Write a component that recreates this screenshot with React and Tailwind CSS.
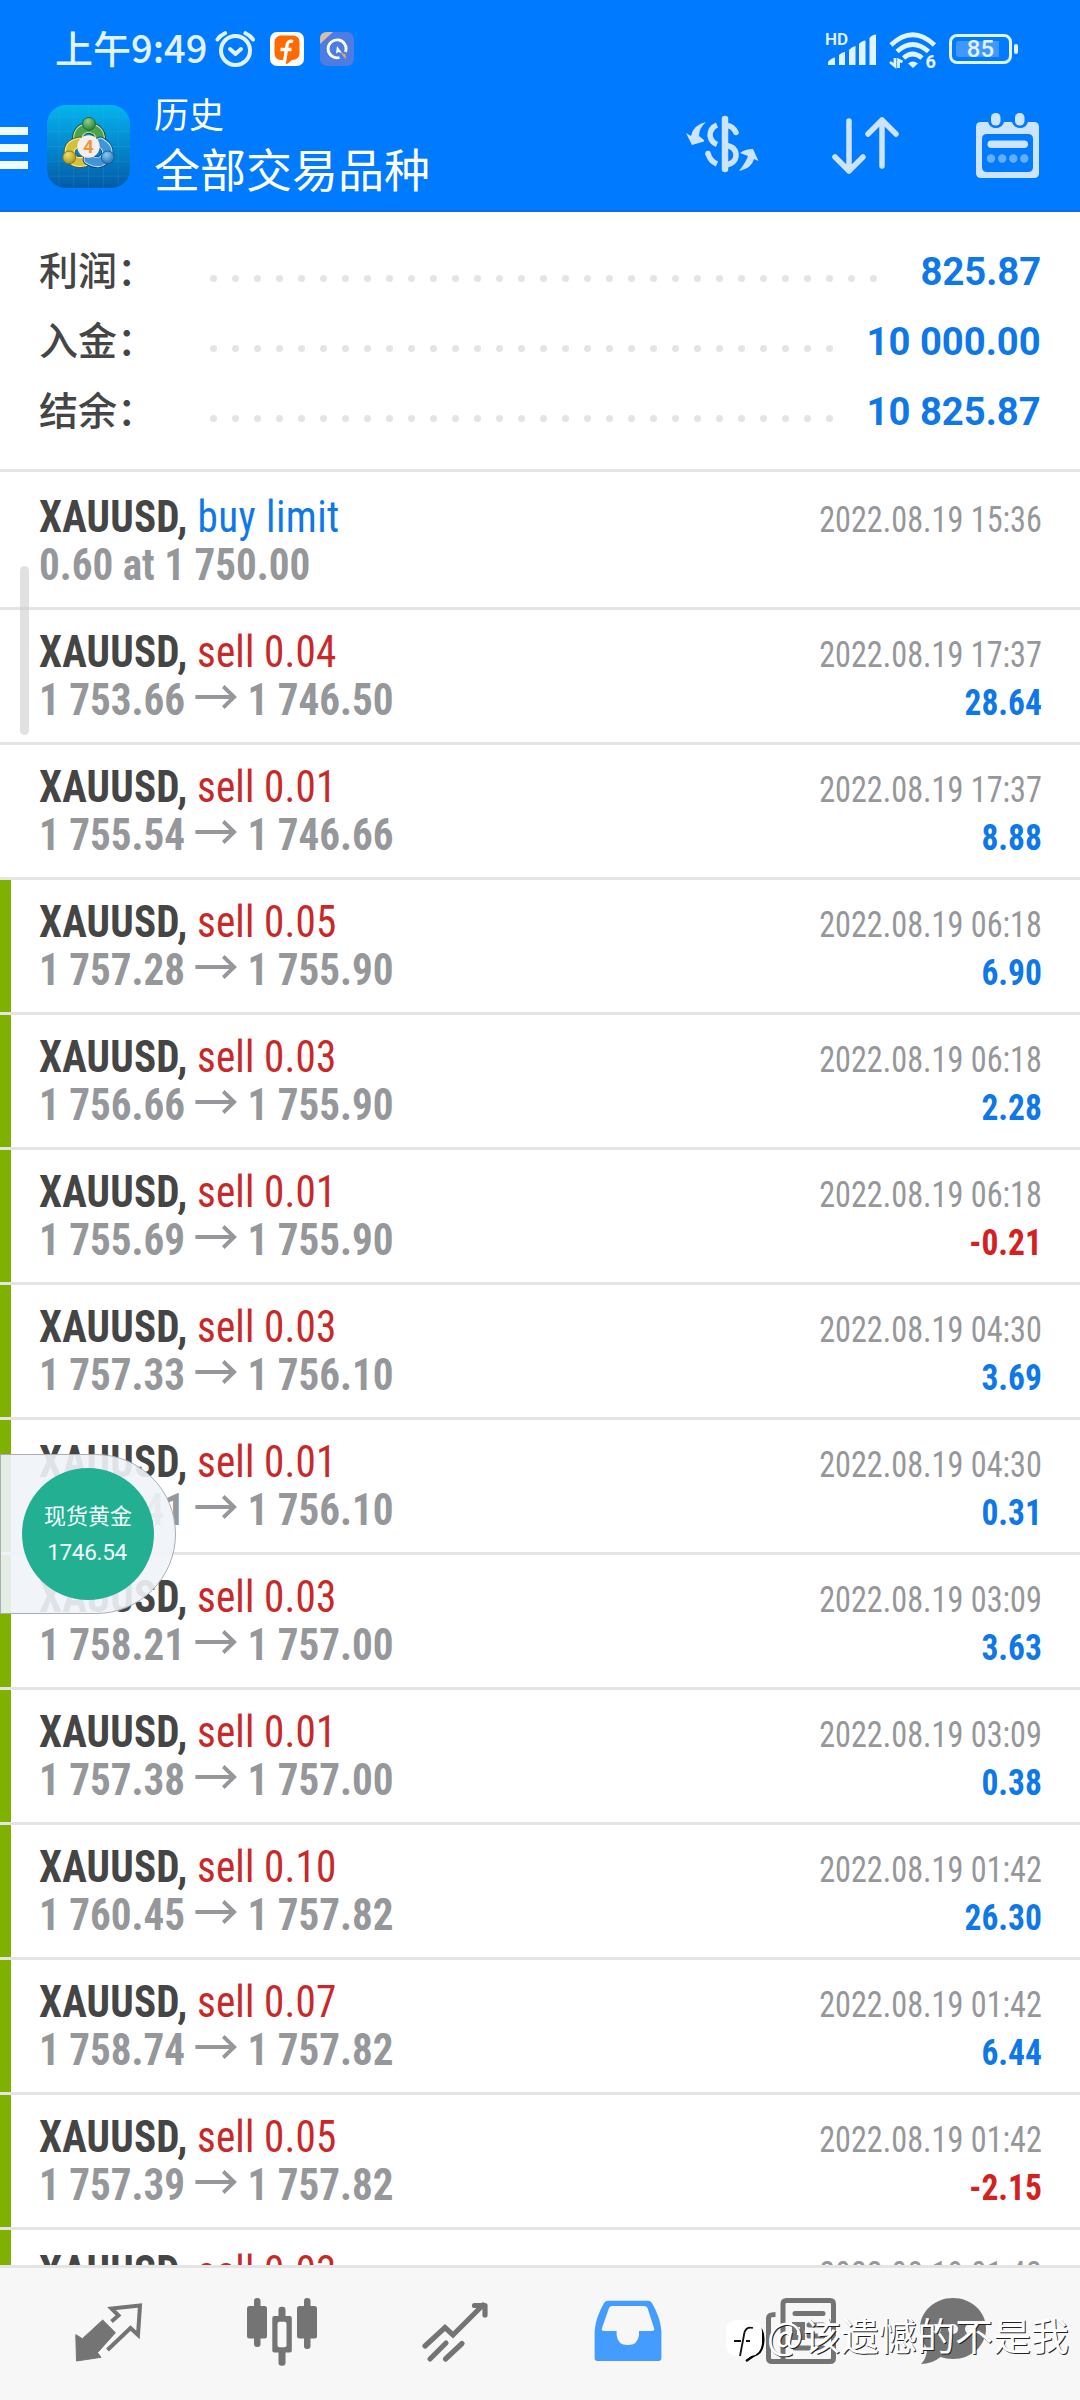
const summary = [
  { label: '利润', value: '825.87', dots: 31 },
  { label: '入金', value: '10 000.00', dots: 29 },
  { label: '结余', value: '10 825.87', dots: 29 },
]

const deals = [
  { type: 'sell 0.04', from: '1 753.66', to: '1 746.50', time: '2022.08.19 17:37', profit: '28.64' },
  { type: 'sell 0.01', from: '1 755.54', to: '1 746.66', time: '2022.08.19 17:37', profit: '8.88' },
  { type: 'sell 0.05', from: '1 757.28', to: '1 755.90', time: '2022.08.19 06:18', profit: '6.90', marked: true },
  { type: 'sell 0.03', from: '1 756.66', to: '1 755.90', time: '2022.08.19 06:18', profit: '2.28', marked: true },
  { type: 'sell 0.01', from: '1 755.69', to: '1 755.90', time: '2022.08.19 06:18', profit: '-0.21', marked: true },
  { type: 'sell 0.03', from: '1 757.33', to: '1 756.10', time: '2022.08.19 04:30', profit: '3.69', marked: true },
  { type: 'sell 0.01', from: '1 756.41', to: '1 756.10', time: '2022.08.19 04:30', profit: '0.31', marked: true },
  { type: 'sell 0.03', from: '1 758.21', to: '1 757.00', time: '2022.08.19 03:09', profit: '3.63', marked: true },
  { type: 'sell 0.01', from: '1 757.38', to: '1 757.00', time: '2022.08.19 03:09', profit: '0.38', marked: true },
  { type: 'sell 0.10', from: '1 760.45', to: '1 757.82', time: '2022.08.19 01:42', profit: '26.30', marked: true },
  { type: 'sell 0.07', from: '1 758.74', to: '1 757.82', time: '2022.08.19 01:42', profit: '6.44', marked: true },
  { type: 'sell 0.05', from: '1 757.39', to: '1 757.82', time: '2022.08.19 01:42', profit: '-2.15', marked: true },
  { type: 'sell 0.03', from: '1 758.05', to: '1 757.82', time: '2022.08.19 01:42', profit: '2.30', marked: true },
]

function StatusBar() {
  return (
    <div className="flex h-[96px] items-start pl-[55px] pr-[62px] text-[#e0f3ff]">
      <span className="mt-[27px] w-[160px] whitespace-nowrap font-['Noto_Sans_CJK_SC',sans-serif] text-[38px] font-medium leading-[40px]">
        上午9:49
      </span>
      <svg className="mt-[30px] h-[38px] w-[40px]" viewBox="0 0 40 38" fill="none" stroke="currentColor">
        <circle cx="20.5" cy="20.5" r="14.5" strokeWidth="4" />
        <path d="M15 19l5.500 5 5.500-5" strokeWidth="4" strokeLinecap="round" strokeLinejoin="round" />
        <path d="M2.500 9.500Q5 5.500 10 3.200M38 9.500Q35.500 5.500 30.500 3.200" strokeWidth="4" strokeLinecap="round" />
      </svg>
      <svg className="ml-[15px] mt-[32px] h-[34px] w-[34px]" viewBox="0 0 34 34">
        <rect width="34" height="34" rx="7" fill="#fff" />
        <path d="M11 3.500H23Q29.500 4 29.500 10V21Q29.500 27.500 22 28L16.500 32.500L15 28H11Q4.500 27.500 4.500 21V10Q5 4 11 3.500Z" fill="#ff6a00" />
        <path d="M23 9.500Q17.500 8 17 13.500L14.500 30M10.500 17.500H21.500" stroke="#fff" strokeWidth="3.300" fill="none" />
      </svg>
      <svg className="ml-[16px] mt-[32px] h-[34px] w-[34px]" viewBox="0 0 34 34">
        <rect width="34" height="34" rx="7" fill="#4d7de2" />
        <path d="M0 12V7Q0 0 7 0H13Z" fill="#d9bfa2" />
        <path d="M19.500 25.500A9 9 0 1 1 25.500 20" fill="none" stroke="#fff" strokeWidth="2.800" />
        <path d="M17 14L22 21L18.500 20L16 21.500Z" fill="#fff" />
        <path d="M20.500 21L25.500 22L26 27.500Z" fill="#d5a673" />
      </svg>
      <div className="flex-1" />
      <svg className="mt-[30px] h-[38px] w-[52px]" viewBox="0 0 52 38" fill="currentColor">
        <text x="0" y="15.300" fontFamily="Roboto, sans-serif" fontSize="17" fontWeight="600">HD</text>
        <path d="M3 35V32Q6 28 10 27.500V35ZM14 35V25Q17 22 20 22V35ZM24 35V20Q27 16.500 30.500 16V35ZM34 35V14Q37 10.500 40.500 10.500V35ZM44.500 35V8Q47 4.500 51 4.500V35Z" />
      </svg>
      <svg className="ml-[12px] mt-[30px] h-[40px] w-[48px]" viewBox="0 0 48 40" fill="none" stroke="currentColor" strokeWidth="4.800">
        <path d="M2 15Q23.500-5.500 45.500 15" />
        <path d="M8 21.500Q23.500 7.500 39.500 21.500" />
        <path d="M14.500 28Q23.500 20 33 28" />
        <path d="M24 38L19 33.500Q24 29.500 29 33.500Z" fill="currentColor" stroke="none" />
        <path d="M1 32L6 36V28M13.500 32L9.500 30V38" strokeWidth="2.800" />
        <text x="36.500" y="37.500" fontFamily="Roboto, sans-serif" fontSize="18" fontWeight="800" fill="currentColor" stroke="none">6</text>
      </svg>
      <div className="ml-[12px] mt-[34px] flex items-center">
        <div className="flex h-[30px] w-[63px] rounded-[8px] border-[3px] border-current p-[4px]">
          <div className="flex w-[43px] items-center justify-center rounded-l-[3px] bg-[#4098ff] pl-[6px] font-['Roboto',sans-serif] text-[24px] font-medium leading-none">
            85
          </div>
        </div>
        <div className="ml-[2px] h-[10px] w-[4px] rounded-[2px] bg-current" />
      </div>
    </div>
  )
}

function AppLogo() {
  return (
    <svg className="h-[83px] w-[83px]" viewBox="0 0 84 84">
      <defs>
        <linearGradient id="tile" x1="0" y1="0" x2="0" y2="1">
          <stop offset="0" stopColor="#05b4ee" />
          <stop offset="0.500" stopColor="#0488cc" />
          <stop offset="1" stopColor="#035ba8" />
        </linearGradient>
        <radialGradient id="green" cx="0.400" cy="0.300" r="0.800">
          <stop offset="0" stopColor="#8fd08a" />
          <stop offset="1" stopColor="#1c7a31" />
        </radialGradient>
        <radialGradient id="gold" cx="0.400" cy="0.300" r="0.800">
          <stop offset="0" stopColor="#eee26e" />
          <stop offset="1" stopColor="#a38c10" />
        </radialGradient>
        <radialGradient id="sky" cx="0.400" cy="0.300" r="0.800">
          <stop offset="0" stopColor="#8accf2" />
          <stop offset="1" stopColor="#1564ad" />
        </radialGradient>
      </defs>
      <rect width="84" height="84" rx="19" fill="url(#tile)" />
      <path d="M12 2V82M27 0V84M42 0V84M57 0V84M72 2V82M2 12H82M0 27H84M0 42H84M0 57H84M2 72H82" stroke="#46bdf0" strokeOpacity="0.180" />
      {/* three figures holding the round badge */}
      <g strokeLinecap="round" fill="none">
        <path d="M32 38Q29 25 42 23Q56 25 53 38" stroke="#174f2c" strokeWidth="12" />
        <path d="M32 38Q29 25 42 23Q56 25 53 38" stroke="#dcebc4" strokeWidth="10" />
        <path d="M32 38Q29 25 42 23Q56 25 53 38" stroke="#4ba44c" strokeWidth="8" />
        <path d="M33 38Q22 40 23 49Q25 60 38 57" stroke="#5f5a14" strokeWidth="12" />
        <path d="M33 38Q22 40 23 49Q25 60 38 57" stroke="#f6f2b8" strokeWidth="10" />
        <path d="M33 38Q22 40 23 49Q25 60 38 57" stroke="#d3c03c" strokeWidth="8" />
        <path d="M54 38Q64 44 60 52Q54 62 42 55" stroke="#0c4380" strokeWidth="12" />
        <path d="M54 38Q64 44 60 52Q54 62 42 55" stroke="#cdeafa" strokeWidth="10" />
        <path d="M54 38Q64 44 60 52Q54 62 42 55" stroke="#3f95d6" strokeWidth="8" />
      </g>
      <circle cx="42.500" cy="19" r="6.500" fill="url(#green)" stroke="#1d6a33" />
      <circle cx="22.500" cy="53" r="6.500" fill="url(#gold)" stroke="#85751a" />
      <circle cx="61.500" cy="53" r="6.500" fill="url(#sky)" stroke="#155a9c" />
      <circle cx="42" cy="42" r="11.300" fill="#f4efeb" />
      <text x="42" y="49" textAnchor="middle" fontFamily="Roboto, sans-serif" fontSize="19" fontWeight="700" fill="#f0953c">4</text>
    </svg>
  )
}

function Toolbar() {
  return (
    <div className="flex h-[114px] items-start pr-[40px] text-white">
      <div className="mt-[31px] flex w-[28px] flex-col gap-[9px]">
        <div className="h-[8px] bg-[#f0faff]" />
        <div className="h-[8px] bg-[#f0faff]" />
        <div className="h-[8px] bg-[#f0faff]" />
      </div>
      <div className="ml-[19px] mt-[9px]">
        <AppLogo />
      </div>
      <div className="ml-[24px] font-['Noto_Sans_CJK_SC',sans-serif]">
        <div className="mt-[-3px] text-[35px] leading-[40px]">历史</div>
        <div className="mt-[7px] text-[46px] leading-[54px]">全部交易品种</div>
      </div>
      <div className="flex-1" />
      <svg className="mt-[19px] h-[60px] w-[74px]" viewBox="0 0 74 60" fill="none" stroke="#cce4ff" strokeWidth="5.500">
        <path d="M39 4V54" strokeLinecap="round" strokeWidth="6.500" />
        <path d="M31 10Q24 13 24 20.500Q25 27 31 29.500" />
        <path d="M41 10.500Q47 11 50 17.500" strokeLinecap="round" />
        <path d="M22 38.500Q24 46 31 49" />
        <circle cx="22" cy="38.500" r="2.700" fill="#cce4ff" stroke="none" />
        <path d="M40 30.500Q50 32 50 40Q50 48 40 50" />
        <path d="M20 7Q7 10 5 21L0 18L6 30L18 26.500L18 25L13 21Q13 13 20 7Z" fill="#cce4ff" stroke="none" />
        <path d="M53 56Q60 47 62 41L54 38Q59 34 67 34L72.500 46L68 44Q66 53 53 56Z" fill="#cce4ff" stroke="none" />
      </svg>
      <svg className="ml-[72px] mt-[19px] h-[62px] w-[68px]" viewBox="0 0 68 62" fill="none" stroke="#cce4ff" strokeWidth="5.500" strokeLinecap="round" strokeLinejoin="round">
        <path d="M17 6V56M3 42L17 56L31 42" />
        <path d="M50 51V5M36 19L50 5L64 19" />
      </svg>
      <svg className="ml-[76px] mt-[17px] h-[66px] w-[64px]" viewBox="0 0 64 66">
        <path fillRule="evenodd" fill="#cce4ff" d="M5 9H12Q14 15 20 15Q26 15 28 9H36Q38 15 44 15Q50 15 52 9H58Q63 9 63 14V60Q63 65 58 65H5Q0 65 0 60V14Q0 9 5 9ZM11 21Q6 21 6 26V54Q6 59 11 59H52Q57 59 57 54V26Q57 21 52 21Z" />
        <rect x="15" y="0" width="9.500" height="12.500" rx="4.500" fill="#cce4ff" />
        <rect x="39" y="0" width="9.500" height="12.500" rx="4.500" fill="#cce4ff" />
        <rect x="11.500" y="27.500" width="40.500" height="7.500" rx="3.700" fill="#cce4ff" />
        <g fill="#66afff">
          <circle cx="15" cy="45.500" r="4.200" />
          <circle cx="26.200" cy="45.500" r="4.200" />
          <circle cx="37.300" cy="45.500" r="4.200" />
          <circle cx="48.300" cy="45.500" r="4.200" />
        </g>
      </svg>
    </div>
  )
}

function Summary() {
  return (
    <div className="h-[260px] border-b-[3px] border-[#e4e4e4] pl-[39px] pr-[39px] pt-[24px]">
      {summary.map((item) => (
        <div key={item.label} className="flex h-[70px] items-center">
          <span className="mt-[-6px] w-[171px] font-['Noto_Sans_CJK_SC',sans-serif] text-[39px] font-medium leading-[70px] text-[#454545]">
            {item.label}：
          </span>
          <span className="mt-[15px] flex gap-[15px]">
            {Array.from({ length: item.dots }, (_, i) => (
              <span key={i} className="h-[7px] w-[7px] rounded-full bg-[#e4e4e4]" />
            ))}
          </span>
          <span className="ml-auto mt-[2px] origin-right scale-x-[0.98] whitespace-nowrap font-['Roboto',sans-serif] text-[39px] font-bold leading-[70px] text-[#0f78e8]">
            {item.value}
          </span>
        </div>
      ))}
    </div>
  )
}

function Arrow() {
  return (
    <svg className="ml-[10px] mr-[11px] inline-block h-[24px] w-[45px] align-[6px]" viewBox="0 0 45 24" fill="none" stroke="#96979b" strokeWidth="4">
      <path d="M0.500 12H41" />
      <path d="M30 1.500L41.500 12L30 22.500" />
    </svg>
  )
}

function Deal({ deal }) {
  return (
    <div className="flex h-[135px] shrink-0 border-b-[3px] border-[#e4e4e4]">
      <div className={deal.marked ? 'w-[11px] bg-[#7eb100]' : 'w-[11px]'} />
      <div className="flex flex-1 justify-between whitespace-nowrap pl-[28px] pr-[38px] pt-[19px] font-['Roboto_Condensed','Roboto',sans-serif] font-stretch-condensed">
        <div className="origin-left scale-x-[0.945] text-[43.500px] leading-[48px]">
          <div className="font-[430] tracking-[0.15px] text-[#c92828]">
            <span className="font-bold tracking-[0.2px] text-[#454545]">XAUUSD,</span> {deal.type}
          </div>
          <div className="font-bold text-[#96979b]">
            {deal.from}
            <Arrow />
            {deal.to}
          </div>
        </div>
        <div className="pt-[2px] text-right text-[36px] leading-[48px]">
          <div className="origin-right scale-x-[0.895] text-[#96979b]">{deal.time}</div>
          <div className={deal.profit.startsWith('-') ? 'origin-right scale-x-[0.93] font-bold text-[#d32020]' : 'origin-right scale-x-[0.93] font-bold text-[#0f78e8]'}>
            {deal.profit}
          </div>
        </div>
      </div>
    </div>
  )
}

function PendingOrder() {
  return (
    <div className="flex h-[138px] shrink-0 justify-between whitespace-nowrap border-b-[3px] border-[#e4e4e4] pl-[39px] pr-[38px] pt-[22px] font-['Roboto_Condensed','Roboto',sans-serif] font-stretch-condensed">
      <div className="origin-left scale-x-[0.945] text-[43.500px] leading-[48px]">
        <div className="font-[430] tracking-[0.5px] text-[#0f78e8]">
          <span className="font-bold tracking-[0.2px] text-[#454545]">XAUUSD,</span> buy limit
        </div>
        <div className="font-bold text-[#96979b]">0.60 at 1 750.00</div>
      </div>
      <div className="origin-right scale-x-[0.895] pt-[2px] text-[36px] leading-[48px] text-[#96979b]">2022.08.19 15:36</div>
    </div>
  )
}

function QuoteBubble() {
  return (
    <div className="absolute left-0 top-[1454px] flex h-[160px] w-[176px] items-center rounded-r-[80px] border border-[#a9adb3] bg-[#eff4fa]/90 pl-[21px]">
      <div className="flex h-[132px] w-[132px] flex-col items-center rounded-full bg-[#22af92] pt-[27px] font-['Noto_Sans_CJK_SC',sans-serif] text-[22px] leading-[38px] text-[#f0fffb]">
        <span>现货黄金</span>
        <span className="mr-[2px] font-['Roboto',sans-serif] text-[22.500px] tracking-[-0.3px]">1746.54</span>
      </div>
    </div>
  )
}

function TabBar() {
  return (
    <div className="flex h-[135px] border-t-[3px] border-[#e4e4e4] bg-[#f7f7f7] pl-[22px] pt-[26px] text-[#747474]">
      <div className="flex w-[173px] justify-center">
        <svg className="h-[72px] w-[72px]" viewBox="0 0 72 72">
          <path d="M38.500 27.500L45.500 21.500L38.500 14.500L67 11.500L65 41L57.500 34L34.500 56" fill="none" stroke="currentColor" strokeWidth="4" />
          <path d="M29.700 26L42.400 38.700L24.500 58.700L28 63.300L3.500 67L2.800 40.700L9.400 44.700Z" fill="currentColor" stroke="currentColor" strokeLinejoin="round" />
        </svg>
      </div>
      <div className="flex w-[173px] justify-center">
        <svg className="h-[72px] w-[72px]" viewBox="0 0 72 72" fill="currentColor">
          <rect x="1" y="12" width="20" height="32.500" rx="2.500" />
          <rect x="8" y="4" width="6.500" height="49" rx="3" />
          <rect x="51" y="12" width="20" height="32.500" rx="2.500" />
          <rect x="58" y="4" width="6.500" height="51" rx="3" />
          <rect x="32.500" y="12.700" width="7" height="59" rx="3" />
          <rect x="26.300" y="22" width="19.500" height="36.500" rx="2" />
          <rect x="31.500" y="27.700" width="9" height="25.500" rx="2" fill="#f7f7f7" />
        </svg>
      </div>
      <div className="flex w-[173px] justify-center">
        <svg className="h-[72px] w-[72px]" viewBox="0 0 72 72" fill="none" stroke="currentColor" strokeWidth="5.200" strokeLinecap="round">
          <path d="M6 52L26 33.500L34 41L64 11" />
          <path d="M55.500 11.500H66V21" strokeLinejoin="round" />
          <path d="M11 65L27 49M26.500 65L43 49.500" />
        </svg>
      </div>
      <div className="flex w-[173px] justify-center">
        <svg className="h-[72px] w-[72px]" viewBox="0 0 72 72">
          <path fill="#449cff" fillRule="evenodd" d="M16 6.700H56Q58.500 6.700 60 9Q68.500 24 69.400 37V64Q69.400 67 66.400 67H5.600Q2.600 67 2.600 64V37Q3.500 24 12 9Q13.500 6.700 16 6.700ZM20 12Q18 12 17 14L10 34Q9 37 12 37H24.600V41Q25.500 51 35.800 51Q46 51 47 41V37H60Q63 37 62 34L55.500 14Q54.500 12 52 12Z" />
        </svg>
      </div>
      <div className="flex w-[173px] justify-center">
        <svg className="h-[72px] w-[72px]" viewBox="0 0 72 72" fill="none" stroke="currentColor" strokeWidth="5">
          <path d="M18 67.500V10Q18 6.500 21.500 6.500H65Q68.500 6.500 68.500 10V64Q68.500 67.500 65 67.500H7Q3.500 67.500 3.500 64V24Q3.500 20.500 10.500 20.500" />
          <path d="M30 19.500H58M44 31H58M44 42H58M30 54H58" strokeLinecap="round" />
          <rect x="29.500" y="30.500" width="8" height="13" />
        </svg>
      </div>
      <div className="flex w-[132px] justify-center">
        <svg className="h-[72px] w-[72px]" viewBox="0 0 72 72" fill="currentColor">
          <path d="M36 4C54.500 4 69 17.500 69 34.500S54.500 65 36 65Q29 65 23.500 63Q15 70 4 70Q10 64 10 54.500Q3 45 3 34.500C3 17.500 17.500 4 36 4Z" />
          <circle cx="19" cy="35" r="5" fill="#f7f7f7" />
          <circle cx="36" cy="35" r="5" fill="#f7f7f7" />
          <circle cx="53" cy="35" r="5" fill="#f7f7f7" />
        </svg>
      </div>
    </div>
  )
}

function Watermark() {
  return (
    <div className="absolute left-[725px] top-[2305px] flex items-center whitespace-nowrap text-white">
      <svg className="mt-[12px] h-[46px] w-[42px]" viewBox="0 0 42 46">
        <path d="M33 9Q39.500 14 38 26Q37 36 29 38.500L21 44" fill="none" stroke="#000" strokeWidth="2.500" />
        <path d="M11 3H26Q37 4 37 15V26Q36 38 26 39L20 43V39H11Q1 38 1 27V15Q1 4 11 3Z" fill="#fff" />
        <path d="M28 11Q20 9 19 18L15 39M9 24H16M21 24H25" fill="none" stroke="#111" strokeWidth="1.800" />
      </svg>
      <span className="font-['Noto_Sans_CJK_SC',sans-serif] text-[38px] font-normal leading-[50px] [text-shadow:1px_1px_0_#222]">
        @该遗憾的不是我
      </span>
    </div>
  )
}

export default function App() {
  return (
    <div className="relative flex h-[2400px] w-[1080px] flex-col overflow-hidden bg-white">
      <header className="h-[212px] shrink-0 border-b-2 border-[#0a6ede] bg-[#007aff]">
        <StatusBar />
        <Toolbar />
      </header>
      <Summary />
      <main className="relative flex min-h-0 flex-1 flex-col overflow-hidden">
        <PendingOrder />
        {deals.map((deal, i) => (
          <Deal key={i} deal={deal} />
        ))}
        <div className="absolute left-[20px] top-[94px] h-[169px] w-[9px] rounded-full bg-[#c8c8c8]/55" />
      </main>
      <TabBar />
      <QuoteBubble />
      <Watermark />
    </div>
  )
}
